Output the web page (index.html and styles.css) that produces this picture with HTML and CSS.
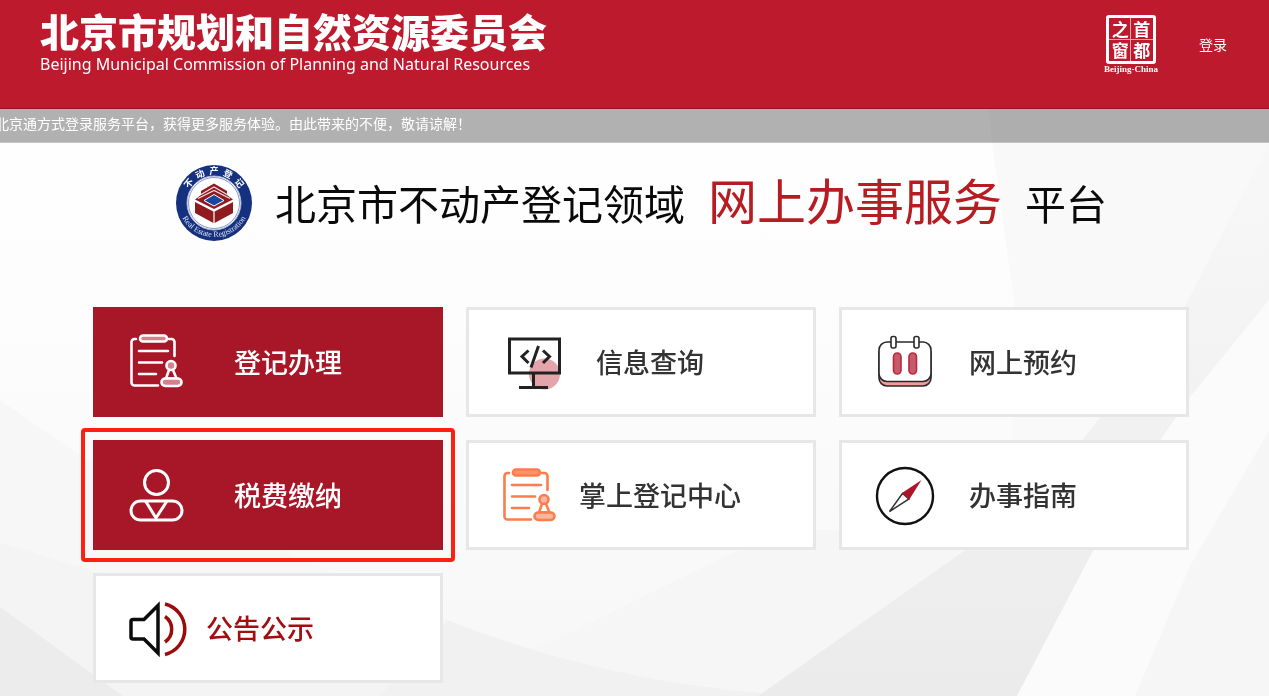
FILE: index.html
```html
<!DOCTYPE html>
<html lang="zh-CN">
<head>
<meta charset="utf-8">
<meta name="viewport" content="width=device-width, initial-scale=1">
<title>北京市不动产登记领域网上办事服务平台</title>
<link rel="stylesheet" href="styles.css">
</head>
<body>
<svg class="backdrop" viewBox="0 0 1269 696" preserveAspectRatio="none" aria-hidden="true">
  <defs>
    <linearGradient id="fade" x1="0" y1="0" x2="0" y2="1">
      <stop offset="0.3" stop-color="#fefefe"/><stop offset="1" stop-color="#f7f7f7"/>
    </linearGradient>
    <linearGradient id="beam" gradientUnits="userSpaceOnUse" x1="0" y1="142" x2="0" y2="696">
      <stop offset="0" stop-color="#f8f8f8"/><stop offset="0.6" stop-color="#f0f0f0"/><stop offset="1" stop-color="#ebebeb"/>
    </linearGradient>
  </defs>
  <rect width="1269" height="696" fill="url(#fade)"/>
  <path d="M0 400 82 457 330 572 447 620V696H0z" fill="#f7f7f7"/>
  <path d="M0 543Q200 600 420 696H123L0 607z" fill="#f4f4f4"/>
  <path d="M0 607 123 696H0z" fill="#ececec"/>
  <path d="M780 530 472 680 500 696H758L961 553V530z" fill="#f6f6f6"/>
  <path d="M447 620Q600 680 762 693V696H380z" fill="#f1f1f1"/>
  <path d="M989 109 992 142 1015 308 1012 442 992 553 947 696H1269V109z" fill="#f9f9f9"/>
  <path d="M1269 142 1184 308 1081 442 961 553 758 696H1017L1092 553 1159 442 1190 397 1269 300z" fill="url(#beam)"/>
  <path d="M1269 300 1190 397 1159 442 1092 553 1017 696H1269z" fill="#fbfbfb"/>
  <path d="M1269 431 1190 566 1135 696H1269z" fill="#f6f6f6"/>
</svg>

<header class="masthead">
  <div class="brand">
    <div class="brand-name">北京市规划和自然资源委员会</div>
    <div class="brand-sub">Beijing Municipal Commission of Planning and Natural Resources</div>
  </div>
  <a class="seal" href="#">
    <span class="seal-box"><span>之</span><span>首</span><span>窗</span><span>都</span></span>
    <span class="seal-name">Beijing-China</span>
  </a>
  <a class="login" href="#">登录</a>
</header>

<div class="notice"><p class="notice-text">北京通方式登录服务平台，获得更多服务体验。由此带来的不便，敬请谅解！</p></div>

<main class="portal">
  <h1 class="title">
    <svg class="emblem" viewBox="0 0 76 76" role="img" aria-label="不动产登记">
      <defs>
        <path id="arc-top" d="M9 38A29 29 0 0 1 67 38"/>
        <path id="arc-bottom" d="M2 36A36 36 0 0 0 74 36"/>
      </defs>
      <circle cx="38" cy="38" r="38" fill="#14307f"/>
      <circle cx="38" cy="38" r="27" fill="#fff" stroke="#a9b5d8" stroke-width="1"/>
      <circle cx="38" cy="38" r="25.500" fill="none" stroke="#3a5097" stroke-width="0.600"/>
      <text class="emblem-cn"><textPath href="#arc-top" startOffset="50%" text-anchor="middle">不&#160; 动&#160; 产&#160; 登&#160; 记</textPath></text>
      <text class="emblem-en"><textPath href="#arc-bottom" startOffset="50%" text-anchor="middle">Real Estate Registration</textPath></text>
      <path d="M19 37 37.400 46.500V58L19 48zM57 37 38.600 46.500V58L57 48z" fill="#8f1a20"/>
      <path d="M38 18.500 51 26V30L57 34.500 38 44 19 34.500 25 30V26z" fill="#8f1a20"/>
      <path d="M22 33.500 38 25.500 54 33.500M25 29.500 38 22 51 29.500" fill="none" stroke="#f3dedd" stroke-width="1.200"/>
      <path d="M38 29.500 48 35.500 38 41 28 35.500z" fill="#17479e" stroke="#fff" stroke-width="1"/>
    </svg>
    <span>北京市不动产登记领域</span>
    <span class="title-accent">网上办事服务</span>
    <span>平台</span>
  </h1>

  <nav class="services">
    <a class="card card-primary gap-wide" href="#">
      <svg class="icon" viewBox="0 0 60 60" fill="none" stroke="#fff" stroke-width="2.600" stroke-linecap="round" stroke-linejoin="round">
        <path d="M8 7H6.500a3 3 0 0 0-3 3V50.500a3 3 0 0 0 3 3H30M41 7H43.500a3 3 0 0 1 3 3V24M11 19H40M11 30.500H34M11 42H28"/>
        <rect x="12" y="3.500" width="27" height="6" rx="3" fill="#d5808c"/>
        <circle cx="43" cy="33.500" r="4.500" fill="#d5808c"/><path d="M41 38 38 46.500H48.500L45 38"/>
        <rect x="33.500" y="46.500" width="20" height="7.500" rx="3.700" fill="#d5808c"/>
      </svg>
      <span>登记办理</span>
    </a>
    <a class="card gap-medium" href="#">
      <svg class="icon" viewBox="0 0 60 60" fill="none" stroke="#222" stroke-width="3">
        <circle cx="43.500" cy="42" r="15.500" fill="#e3a5aa" stroke="none"/>
        <path d="M8.500 7H58.500V41H8.500zM32.500 41V55M18 55.500H47"/>
        <path d="M27.500 18.500 21 24.500 27.500 31M42 18.500 48.500 24.500 42 31M37.500 14 30 35.500"/>
      </svg>
      <span>信息查询</span>
    </a>
    <a class="card gap-medium" href="#">
      <svg class="icon" viewBox="0 0 60 60" fill="none" stroke="#2a2a2a" stroke-width="1.600">
        <rect x="5" y="14" width="52" height="40" rx="8" fill="#f49a98"/>
        <rect x="5" y="10" width="52" height="39.500" rx="8" fill="#fff"/>
        <rect x="17" y="4.500" width="5" height="11.500" rx="2" fill="#fff"/><rect x="40" y="4.500" width="5" height="11.500" rx="2" fill="#fff"/>
        <rect x="19.500" y="21" width="7.500" height="21" rx="3.700" fill="#c65b6c" stroke="#b8283f"/><rect x="35" y="21" width="7.500" height="21" rx="3.700" fill="#c65b6c" stroke="#b8283f"/>
      </svg>
      <span>网上预约</span>
    </a>
    <a class="card card-primary card-marked gap-wide" href="#">
      <svg class="icon" viewBox="0 0 60 60" fill="none" stroke="#fff" stroke-width="3" stroke-linejoin="round">
        <circle cx="28.500" cy="17.500" r="12"/>
        <rect x="3" y="36" width="51" height="19" rx="9.500"/><path d="M17.500 36 28 53 39 36"/>
      </svg>
      <span>税费缴纳</span>
    </a>
    <a class="card gap-narrow" href="#">
      <svg class="icon" viewBox="0 0 60 60" fill="none" stroke="#fc7d4c" stroke-width="2.600" stroke-linecap="round" stroke-linejoin="round">
        <path d="M8 8H6.500a3 3 0 0 0-3 3V51.500a3 3 0 0 0 3 3H30M41 8H43.500a3 3 0 0 1 3 3V25M11 20H40M11 31.500H34M11 43H28"/>
        <rect x="12" y="4.500" width="27" height="6" rx="3" fill="#ff9368"/>
        <circle cx="43" cy="34.500" r="4.500" fill="#fbb6a2"/><path d="M41 39 38 47.500H48.500L45 39"/>
        <rect x="33.500" y="47.500" width="20" height="7.500" rx="3.700" fill="#fbb6a2"/>
      </svg>
      <span>掌上登记中心</span>
    </a>
    <a class="card gap-medium" href="#">
      <svg class="icon" viewBox="0 0 60 60" fill="none">
        <circle cx="31" cy="31" r="28" stroke="#111" stroke-width="2.400"/>
        <path d="M28.500 28.500 15.500 46.500 35 34z" stroke="#333" stroke-width="1.500"/>
        <path d="M47.500 15 28 28 35 35z" fill="#ad152b"/>
      </svg>
      <span>办事指南</span>
    </a>
    <a class="card card-notice gap-narrow" href="#">
      <svg class="icon" viewBox="0 0 60 60" fill="none" stroke="#0c0c0c" stroke-width="3.500">
        <path d="M16 21.500H5a2 2 0 0 0-2 2V39a2 2 0 0 0 2 2H16L30 55V7.500z"/>
        <path d="M37 18.500A15.500 15.500 0 0 1 37 44M37 6A26 26 0 0 1 37 56.500" stroke="#9b0b0b"/>
      </svg>
      <span>公告公示</span>
    </a>
  </nav>
</main>
</body>
</html>
```
FILE: styles.css
```css
* { box-sizing: border-box; }

body {
  margin: 0;
  min-height: 100vh;
  background: #fbfbfb;
  color: #333;
  font-family: "Noto Sans CJK SC", "Noto Sans", sans-serif;
}

a { color: inherit; text-decoration: none; }

.backdrop {
  position: fixed;
  inset: 0;
  z-index: -1;
  width: 100%;
  height: 100%;
}

.masthead {
  display: flex;
  align-items: flex-start;
  height: 109px;
  padding: 9px 42px 0 40px;
  border-bottom: 1px solid #8f1524;
  background: #bd1a2d;
  color: #fff;
}

.brand { margin-right: auto; white-space: nowrap; }
.brand-name { font-size: 39px; font-weight: 900; line-height: 42px; }
.brand-sub { font: 16px/26px "Noto Sans", sans-serif; }

.seal {
  display: flex;
  flex-direction: column;
  align-items: center;
  margin: 6px 41px 0 0;
}
.seal-box {
  display: grid;
  grid-template-columns: 1fr 1fr;
  gap: 1px;
  width: 50px;
  padding: 1px;
  border: 3px solid #fff;
  border-radius: 3px;
  background:
    linear-gradient(#e9a9b0, #e9a9b0) center / 1px 100% no-repeat,
    linear-gradient(#e9a9b0, #e9a9b0) center / 100% 1px no-repeat;
  font-size: 17px;
  font-weight: 700;
  line-height: 20px;
  text-align: center;
}
.seal-name { font: 700 9px/10px "Liberation Serif", serif; }

.login { margin-top: 25px; font-size: 14px; line-height: 20px; }

.notice {
  height: 34px;
  overflow: hidden;
  border-bottom: 1px solid #c4c4c4;
  background: rgba(0, 0, 0, 0.3);
  color: #fff;
}
.notice-text {
  margin: 0 0 0 -5px;
  font-size: 14px;
  line-height: 28px;
  white-space: nowrap;
}

.portal { padding: 22px 80px 12px 93px; }

.title {
  display: flex;
  align-items: flex-start;
  gap: 23px;
  margin: 0 0 66px 83px;
  color: #0a0a0a;
  font-size: 41px;
  font-weight: 400;
  line-height: 74px;
  white-space: nowrap;
}
.title-accent { color: #b71c22; font-size: 49px; line-height: 68px; }
.emblem { flex: none; width: 76px; height: 76px; }
.emblem-cn { fill: #fff; font-size: 9px; font-weight: 700; }
.emblem-en { fill: #dfe4f2; font: 8px "Liberation Serif", serif; }

.services {
  display: grid;
  grid-template-columns: repeat(3, 1fr);
  gap: 23px;
}

.card {
  display: flex;
  align-items: center;
  height: 110px;
  padding-left: 32px;
  border: 3px solid #e7e7e7;
  background: #fff;
  font-size: 27px;
  font-weight: 500;
  line-height: 40px;
  white-space: nowrap;
}
.card-primary { border-color: #a81728; background: #a81728; color: #fff; }
.card-notice { color: #a01012; }
.gap-wide { gap: 46px; }
.gap-medium { gap: 35px; }
.gap-narrow { gap: 18px; }
.icon { flex: none; width: 60px; height: 60px; overflow: visible; }

.card-marked { position: relative; }
.card-marked::after {
  content: "";
  position: absolute;
  inset: -15px;
  border: 4px solid #ff2013;
  border-radius: 4px;
}
```
